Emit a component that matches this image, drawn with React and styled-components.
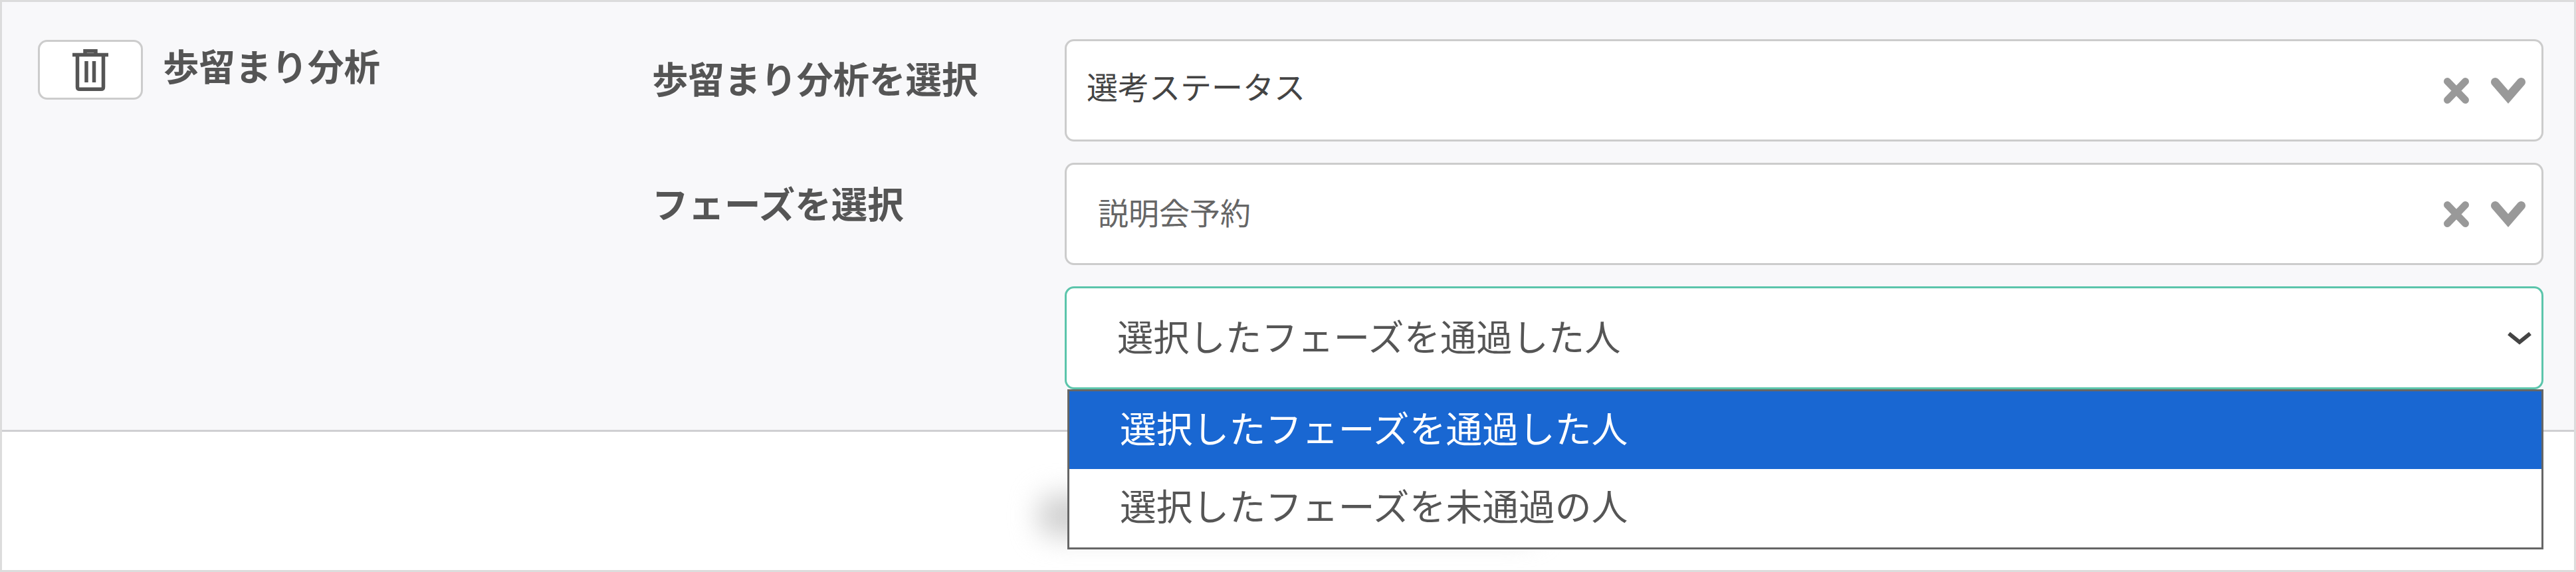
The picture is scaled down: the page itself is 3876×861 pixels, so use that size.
import React from 'react'
import styled, {createGlobalStyle} from 'styled-components'

const GlobalStyle = createGlobalStyle`
    html, body {
        margin: 0;
        padding: 0;
        background: #fff;
    }
    body {
        font-family: "Noto Sans CJK JP", "Noto Sans", sans-serif;
        color: #555;
    }
`

function TrashIcon() {
    return (
        <svg width="54" height="63" viewBox="0 0 54 63" fill="none" stroke="#555" strokeWidth="5.500">
            <path d="M0 8.500h54"/>
            <path d="M19 7V2.750h16V7"/>
            <path d="M7.500 9v48c0 2 1 3.250 3.500 3.250h32c2.500 0 3.500-1.250 3.500-3.250V9"/>
            <path d="M21 18v32M32.500 18v32"/>
        </svg>
    )
}

function ClearIcon() {
    return (
        <svg width="38" height="39" viewBox="0 0 38 39" fill="none" stroke="#999" strokeWidth="11" strokeLinecap="round">
            <path d="M5.500 5.500l27 28M32.500 5.500l-27 28"/>
        </svg>
    )
}

function ChevronIcon() {
    return (
        <svg width="52" height="39" viewBox="0 0 52 39" fill="none" stroke="#999" strokeWidth="13" strokeLinecap="round" strokeLinejoin="miter">
            <path d="M6.500 6.500L26 29L45.500 6.500"/>
        </svg>
    )
}

function NativeChevron() {
    return (
        <svg width="36" height="20" viewBox="0 0 36 20" fill="none" stroke="#444" strokeWidth="6">
            <path d="M2 3l16 13L34 3"/>
        </svg>
    )
}

function Combo({value, small}) {
    return (
        <ComboBox>
            <ComboValue $small={small}>{value}</ComboValue>
            <ComboIcons>
                <ClearIcon/>
                <ChevronIcon/>
            </ComboIcons>
        </ComboBox>
    )
}

export default function App() {
    return (
        <>
            <GlobalStyle/>
            <Frame>
                <Section>
                    <TitleGroup>
                        <DeleteButton aria-label="削除"><TrashIcon/></DeleteButton>
                        <Title>歩留まり分析</Title>
                    </TitleGroup>

                    <Rows>
                        <Row>
                            <RowLabel>歩留まり分析を選択</RowLabel>
                            <Combo value="選考ステータス"/>
                        </Row>
                        <Row>
                            <RowLabel $low>フェーズを選択</RowLabel>
                            <Combo value="説明会予約" small/>
                        </Row>
                        <Row>
                            <span/>
                            <SelectWrap>
                                <NativeSelect>
                                    選択したフェーズを通過した人
                                    <NativeChevron/>
                                </NativeSelect>
                                {/* open option list */}
                                <OptionList>
                                    <Option $active>選択したフェーズを通過した人</Option>
                                    <Option>選択したフェーズを未通過の人</Option>
                                </OptionList>
                            </SelectWrap>
                        </Row>
                    </Rows>
                </Section>

                <Footer>
                    <BlurredButton/>
                </Footer>
            </Frame>
        </>
    )
}

const Frame = styled.div`
    box-sizing: border-box;
    width: 3876px;
    height: 861px;
    border: 3px solid #dcdcdc;
    background: #fff;
    display: flex;
    flex-direction: column;
    overflow: hidden;
`

const Section = styled.section`
    box-sizing: border-box;
    height: 647px;
    padding: 56px 46px 0 54px;
    background: #f8f8fa;
    border-bottom: 3px solid #cfcfd2;
    display: grid;
    grid-template-columns: 924px 1fr;
`

const TitleGroup = styled.div`
    display: flex;
    align-items: flex-start;
    gap: 30px;
`

const DeleteButton = styled.button`
    box-sizing: border-box;
    width: 158px;
    height: 90px;
    margin-top: 1px;
    padding: 0;
    background: #fff;
    border: 3px solid #ccc;
    border-radius: 14px;
    display: flex;
    align-items: center;
    justify-content: center;
`

const Title = styled.h2`
    margin: 0;
    font-size: 54.500px;
    line-height: 78px;
    font-weight: 700;
    color: #555;
`

const Rows = styled.div`
    display: flex;
    flex-direction: column;
    gap: 32px;
`

const Row = styled.div`
    display: grid;
    grid-template-columns: 621px 1fr;
`

const RowLabel = styled.label`
    font-size: 54.500px;
    line-height: 80px;
    font-weight: 700;
    color: #555;
    padding-top: ${props => (props.$low ? '20px' : '18px')};
`

const ComboBox = styled.div`
    box-sizing: border-box;
    height: 154px;
    padding: 0 24px 0 30px;
    background: #fff;
    border: 3px solid #ccc;
    border-radius: 14px;
    display: flex;
    align-items: center;
    justify-content: space-between;
`

const ComboValue = styled.span`
    font-size: ${props => (props.$small ? '46px' : '47px')};
    padding-left: ${props => (props.$small ? '17px' : '0')};
    margin-bottom: ${props => (props.$small ? '8px' : '16px')};
    color: ${props => (props.$small ? '#666' : '#444')};
`

const ComboIcons = styled.span`
    display: flex;
    align-items: center;
    gap: 33px;
`

const SelectWrap = styled.div`
    position: relative;
`

const NativeSelect = styled.div`
    box-sizing: border-box;
    height: 155px;
    padding: 0 15px 8px 76px;
    background: #fff;
    border: 3px solid #5cc5ab;
    border-radius: 14px;
    font-size: 54.300px;
    color: #555;
    display: flex;
    align-items: center;
    justify-content: space-between;

    svg {
        margin-top: 8px;
    }
`

const OptionList = styled.div`
    position: absolute;
    z-index: 2;
    top: 100%;
    left: 4px;
    right: 0;
    box-sizing: border-box;
    height: 241px;
    background: #fff;
    border: 3px solid #666;
    display: flex;
    flex-direction: column;
`

const Option = styled.div`
    box-sizing: border-box;
    height: ${props => (props.$active ? '117px' : '118px')};
    padding: 0 0 12px 76px;
    display: flex;
    align-items: center;
    font-size: 54.800px;
    background: ${props => (props.$active ? '#1967d2' : '#fff')};
    color: ${props => (props.$active ? '#fff' : '#555')};
`

const Footer = styled.footer`
    flex: 1;
    display: flex;
    justify-content: center;
    padding-top: 95px;
`

// button of the page, blurred out in the original and mostly behind the list
const BlurredButton = styled.div`
    width: 750px;
    height: 62px;
    border-radius: 20px;
    background: #d0d0d0;
    filter: blur(20px);
`
